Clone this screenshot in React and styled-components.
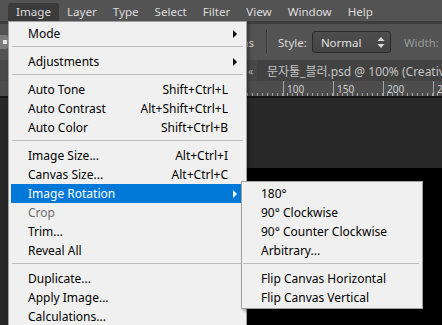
import React from "react";
import styled, { createGlobalStyle } from "styled-components";

const GlobalStyle = createGlobalStyle`
  html, body { margin: 0; padding: 0; background: #282828; }
  body { font-family: "Noto Sans", "Noto Sans CJK KR", sans-serif; }
  * { box-sizing: border-box; }
`;

const Screen = styled.div`
  position: relative;
  width: 442px;
  height: 325px;
  overflow: hidden;
  display: flex;
  flex-direction: column;
  background: #282828;
`;

const MenuBar = styled.div`
  height: 21px;
  flex-shrink: 0;
  display: flex;
  align-items: flex-end;
  padding-left: 8px;
  background: #535353;
`;

const MenuTitle = styled.div`
  height: 18px;
  flex-shrink: 0;
  padding: 0 8px;
  line-height: 17px;
  font-size: 11.6px;
  color: #dcdcdc;
  border-radius: 3px 3px 0 0;
  background: ${(p) => (p.$active ? "#3b3b3b" : "transparent")};
`;

const BarDivider = styled.div`
  height: 3px;
  flex-shrink: 0;
  background: #3e3e3e;
`;

const OptionsBar = styled.div`
  height: 36px;
  flex-shrink: 0;
  display: flex;
  align-items: center;
  background: #535353;
  font-size: 11.5px;
  color: #d6d6d6;
`;

const ToolPreset = styled.div`
  width: 8px;
  height: 14px;
  flex-shrink: 0;
  background: #7b7b7b;
  border-radius: 0 2px 2px 0;
  display: flex;
  align-items: center;
  justify-content: flex-end;
  &::after {
    content: "";
    width: 4px;
    height: 4px;
    margin-right: 1px;
    background: #e6e6e6;
  }
`;

const OptionGroup = styled.div`
  width: ${(p) => p.$w}px;
  flex-shrink: 0;
  text-align: right;
  white-space: nowrap;
  overflow: hidden;
`;

const VDivider = styled.div`
  width: 1px;
  height: 24px;
  flex-shrink: 0;
  margin: 0 11px 0 12px;
  background: #383838;
  box-shadow: 1px 0 0 #5e5e5e;
`;

const OptionLabel = styled.span`
  flex-shrink: 0;
  color: ${(p) => (p.$dim ? "#9a9a9a" : "#dadada")};
  margin-right: ${(p) => p.$gap || 0}px;
  white-space: nowrap;
`;

const SelectBox = styled.div`
  width: 79px;
  height: 22px;
  flex-shrink: 0;
  display: flex;
  align-items: center;
  justify-content: space-between;
  padding: 0 5px 0 8px;
  border: 1px solid #2a2a2a;
  border-radius: 3px;
  background: linear-gradient(#4d4d4d, #444444);
  color: #e2e2e2;
  margin-right: 13px;
`;

const InputBox = styled.div`
  width: 20px;
  height: 22px;
  flex-shrink: 0;
  margin-left: 4px;
  border: 1px solid #2a2a2a;
  background: #474747;
`;

const TabBar = styled.div`
  height: 21px;
  flex-shrink: 0;
  display: flex;
  background: #3a3a3a;
`;

const PanelStub = styled.div`
  width: 257px;
  flex-shrink: 0;
  display: flex;
  align-items: center;
  justify-content: flex-end;
  padding-right: 4px;
  background: #484848;
  color: #bdbdbd;
  font-size: 10px;
`;

const DocTab = styled.div`
  flex: 1;
  display: flex;
  align-items: center;
  padding-left: 10px;
  background: #424242;
  color: #c4c4c4;
  font-size: 12px;
  white-space: nowrap;
  overflow: hidden;
`;

const Ruler = styled.div`
  height: 15px;
  flex-shrink: 0;
  display: flex;
  padding-left: 33px;
  background: #4d4d4d;
  overflow: hidden;
`;

const RulerSegment = styled.div`
  width: 50px;
  flex-shrink: 0;
  border-left: 1px solid #a5a5a5;
  padding: 2px 0 0 3px;
  font-size: 10px;
  line-height: 13px;
  color: #cfcfcf;
  background-image: repeating-linear-gradient(
    to right,
    transparent 0 3px,
    #a5a5a5 3px 4px,
    transparent 4px 5px
  );
  background-size: 100% 3px;
  background-position: left bottom;
  background-repeat: no-repeat;
`;

const RulerEdge = styled.div`
  height: 2px;
  flex-shrink: 0;
  background: #141414;
`;

const Workspace = styled.div`
  flex: 1;
  display: flex;
  padding: 70px 0 0 20px;
  background: #282828;
`;

const DocCanvas = styled.div`
  flex: 1;
  background: #000;
`;

const Dropdown = styled.div`
  position: absolute;
  left: ${(p) => p.$x}px;
  top: ${(p) => p.$y}px;
  width: ${(p) => p.$w}px;
  height: ${(p) => (p.$h ? `${p.$h}px` : "auto")};
  padding: ${(p) => p.$pt}px 0 2px;
  background: #f0f0f0;
  border: 1px solid #a0a0a0;
  box-shadow: 2px 2px 3px rgba(0, 0, 0, 0.35);
  font-size: 12px;
`;

const Row = styled.div`
  height: 19px;
  display: flex;
  align-items: center;
  justify-content: space-between;
  margin: ${(p) => p.$m};
  padding: 0 13px 0 17px;
  white-space: nowrap;
  color: ${(p) => (p.$hl ? "#ffffff" : p.$disabled ? "#6d6d6d" : "#000000")};
  background: ${(p) => (p.$hl ? "#0078d7" : "transparent")};
`;

const Arrow = styled.span`
  width: 0;
  height: 0;
  margin-right: -9px;
  border-top: 4px solid transparent;
  border-bottom: 4px solid transparent;
  border-left: 4px solid ${(p) => (p.$hl ? "#ffffff" : "#000000")};
`;

const Separator = styled.div`
  height: 1px;
  margin: ${(p) => p.$m};
  background: #bdbdbd;
`;

const UpDown = () => (
  <svg width="8" height="11" viewBox="0 0 8 11">
    <path d="M4 0 L7.5 4 H0.5 Z M4 11 L7.5 7 H0.5 Z" fill="#d8d8d8" />
  </svg>
);

const mainItems = [
  { label: "Mode", sub: true },
  "sep",
  { label: "Adjustments", sub: true },
  "sep",
  { label: "Auto Tone", key: "Shift+Ctrl+L" },
  { label: "Auto Contrast", key: "Alt+Shift+Ctrl+L" },
  { label: "Auto Color", key: "Shift+Ctrl+B" },
  "sep",
  { label: "Image Size...", key: "Alt+Ctrl+I" },
  { label: "Canvas Size...", key: "Alt+Ctrl+C" },
  { label: "Image Rotation", sub: true, hl: true },
  { label: "Crop", disabled: true },
  { label: "Trim..." },
  { label: "Reveal All" },
  "sep",
  { label: "Duplicate..." },
  { label: "Apply Image..." },
  { label: "Calculations..." },
];

const subItems = [
  { label: "180°" },
  { label: "90° Clockwise" },
  { label: "90° Counter Clockwise" },
  { label: "Arbitrary..." },
  "sep",
  { label: "Flip Canvas Horizontal" },
  { label: "Flip Canvas Vertical" },
];

const MenuList = ({ items, rowMargin, sepMargin }) =>
  items.map((it, i) =>
    it === "sep" ? (
      <Separator key={i} $m={sepMargin} />
    ) : (
      <Row key={i} $m={rowMargin} $hl={it.hl} $disabled={it.disabled}>
        <span>{it.label}</span>
        {it.key && <span>{it.key}</span>}
        {it.sub && <Arrow $hl={it.hl} />}
      </Row>
    )
  );

const titles = ["Image", "Layer", "Type", "Select", "Filter", "View", "Window", "Help"];
/* segments hidden under the open menu carry no label */
const rulerMarks = ["", "", "", "", "", "100", "150", "200", "250"];

export default function App() {
  return (
    <>
      <GlobalStyle />
      <Screen>
        <MenuBar>
          {titles.map((t, i) => (
            <MenuTitle key={t} $active={i === 0}>
              {t}
            </MenuTitle>
          ))}
        </MenuBar>
        <BarDivider />
        <OptionsBar>
          <ToolPreset />
          <OptionGroup $w={246}>Anti-alias</OptionGroup>
          <VDivider />
          <OptionLabel $gap={5}>Style:</OptionLabel>
          <SelectBox>
            <span>Normal</span>
            <UpDown />
          </SelectBox>
          <OptionLabel $dim>Width:</OptionLabel>
          <InputBox />
        </OptionsBar>
        <TabBar>
          <PanelStub>«</PanelStub>
          <DocTab>문자툴_블러.psd @ 100% (Creative Cloud, RGB/8)</DocTab>
        </TabBar>
        <Ruler>
          {rulerMarks.map((m, i) => (
            <RulerSegment key={i}>{m}</RulerSegment>
          ))}
        </Ruler>
        <RulerEdge />
        <Workspace>
          <DocCanvas />
        </Workspace>

        <Dropdown $x={8} $y={21} $w={239} $pt={2}>
          <MenuList items={mainItems} rowMargin="0 5px 0 2px" sepMargin="3px 3px 5px 3px" />
        </Dropdown>
        <Dropdown $x={241} $y={181} $w={182} $h={128} $pt={2}>
          <MenuList items={subItems} rowMargin="0 2px 0 2px" sepMargin="3px 3px 5px 1px" />
        </Dropdown>
      </Screen>
    </>
  );
}
